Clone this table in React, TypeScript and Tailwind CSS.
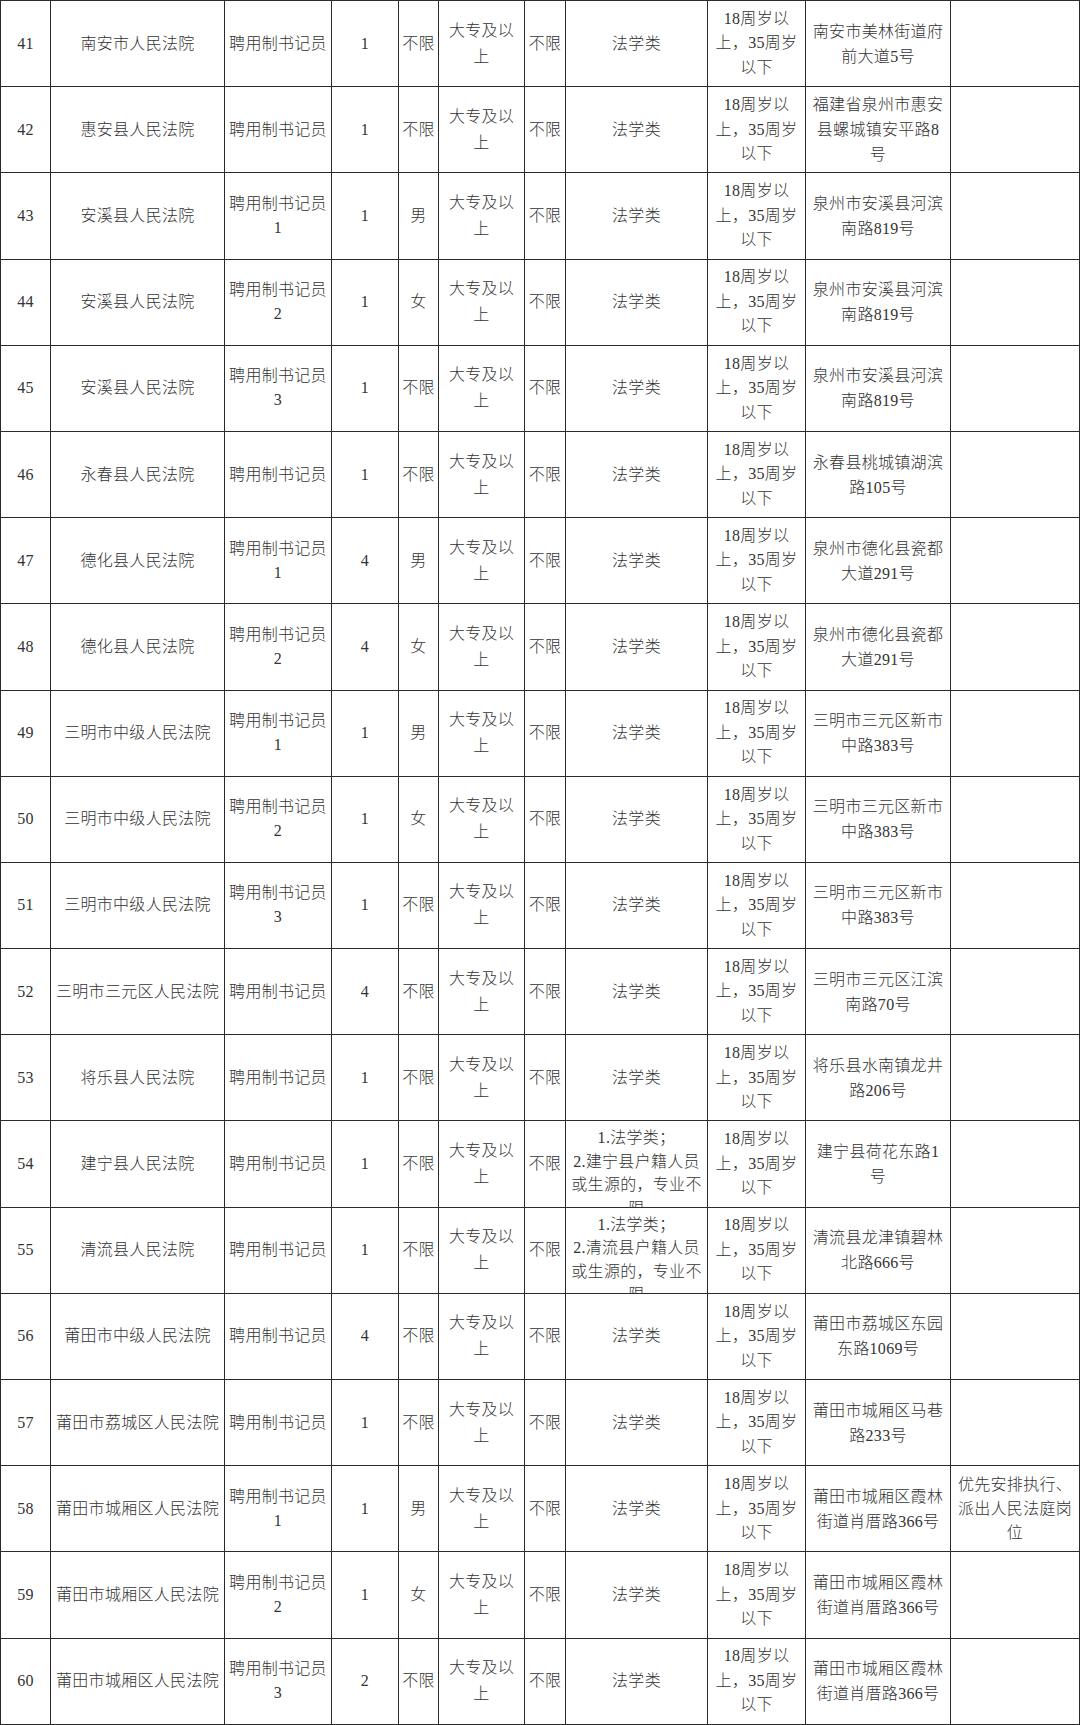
import React from 'react';

type Row = {
    no: number;
    court: string;
    post: string[];
    count: string;
    sex: string;
    major: string[];
    addr: string[];
    note?: string[];
};

const ADDR_AX = ['泉州市安溪县河滨', '南路819号'];
const ADDR_DH = ['泉州市德化县瓷都', '大道291号'];
const ADDR_SM = ['三明市三元区新市', '中路383号'];
const ADDR_CX = ['莆田市城厢区霞林', '街道肖厝路366号'];
const LAW = ['法学类'];

const rows: Row[] = [
    { no: 41, court: '南安市人民法院', post: ['聘用制书记员'], count: '1', sex: '不限', major: LAW, addr: ['南安市美林街道府', '前大道5号'] },
    { no: 42, court: '惠安县人民法院', post: ['聘用制书记员'], count: '1', sex: '不限', major: LAW, addr: ['福建省泉州市惠安', '县螺城镇安平路8', '号'] },
    { no: 43, court: '安溪县人民法院', post: ['聘用制书记员', '1'], count: '1', sex: '男', major: LAW, addr: ADDR_AX },
    { no: 44, court: '安溪县人民法院', post: ['聘用制书记员', '2'], count: '1', sex: '女', major: LAW, addr: ADDR_AX },
    { no: 45, court: '安溪县人民法院', post: ['聘用制书记员', '3'], count: '1', sex: '不限', major: LAW, addr: ADDR_AX },
    { no: 46, court: '永春县人民法院', post: ['聘用制书记员'], count: '1', sex: '不限', major: LAW, addr: ['永春县桃城镇湖滨', '路105号'] },
    { no: 47, court: '德化县人民法院', post: ['聘用制书记员', '1'], count: '4', sex: '男', major: LAW, addr: ADDR_DH },
    { no: 48, court: '德化县人民法院', post: ['聘用制书记员', '2'], count: '4', sex: '女', major: LAW, addr: ADDR_DH },
    { no: 49, court: '三明市中级人民法院', post: ['聘用制书记员', '1'], count: '1', sex: '男', major: LAW, addr: ADDR_SM },
    { no: 50, court: '三明市中级人民法院', post: ['聘用制书记员', '2'], count: '1', sex: '女', major: LAW, addr: ADDR_SM },
    { no: 51, court: '三明市中级人民法院', post: ['聘用制书记员', '3'], count: '1', sex: '不限', major: LAW, addr: ADDR_SM },
    { no: 52, court: '三明市三元区人民法院', post: ['聘用制书记员'], count: '4', sex: '不限', major: LAW, addr: ['三明市三元区江滨', '南路70号'] },
    { no: 53, court: '将乐县人民法院', post: ['聘用制书记员'], count: '1', sex: '不限', major: LAW, addr: ['将乐县水南镇龙井', '路206号'] },
    { no: 54, court: '建宁县人民法院', post: ['聘用制书记员'], count: '1', sex: '不限', major: ['1.法学类；', '2.建宁县户籍人员', '或生源的，专业不', '限'], addr: ['建宁县荷花东路1', '号'] },
    { no: 55, court: '清流县人民法院', post: ['聘用制书记员'], count: '1', sex: '不限', major: ['1.法学类；', '2.清流县户籍人员', '或生源的，专业不', '限'], addr: ['清流县龙津镇碧林', '北路666号'] },
    { no: 56, court: '莆田市中级人民法院', post: ['聘用制书记员'], count: '4', sex: '不限', major: LAW, addr: ['莆田市荔城区东园', '东路1069号'] },
    { no: 57, court: '莆田市荔城区人民法院', post: ['聘用制书记员'], count: '1', sex: '不限', major: LAW, addr: ['莆田市城厢区马巷', '路233号'] },
    { no: 58, court: '莆田市城厢区人民法院', post: ['聘用制书记员', '1'], count: '1', sex: '男', major: LAW, addr: ADDR_CX, note: ['优先安排执行、', '派出人民法庭岗', '位'] },
    { no: 59, court: '莆田市城厢区人民法院', post: ['聘用制书记员', '2'], count: '1', sex: '女', major: LAW, addr: ADDR_CX },
    { no: 60, court: '莆田市城厢区人民法院', post: ['聘用制书记员', '3'], count: '2', sex: '不限', major: LAW, addr: ADDR_CX },
];

// one table cell, lines given explicitly like the source document
const Cell = ({
    lines,
    leading = 'leading-[24px]',
    top = false,
}: {
    lines: string[];
    leading?: string;
    top?: boolean;
}) => (
    <div
        className={`flex flex-col items-center overflow-hidden border-r border-b border-[#2a2a2a] text-center whitespace-nowrap ${leading} ${
            top ? 'justify-start pt-[5px]' : 'justify-center'
        }`}
    >
        {lines.map((l, i) => (
            <span key={i}>{l}</span>
        ))}
    </div>
);

export default function App() {
    return (
        <div className="w-[1080px] bg-white">
            <div
                className="grid w-[1080px] grid-cols-[50px_174px_107px_67px_40px_86px_41px_142px_98px_145px_129px] auto-rows-[86.2px] border-t border-l border-[#2a2a2a] text-[16px] font-light tracking-[0.3px] text-[#333]"
                style={{ fontFamily: '"Liberation Serif", "Noto Sans CJK SC", serif' }}
            >
                {rows.map((r) => {
                    const multi = r.major.length > 1;
                    return (
                        <React.Fragment key={r.no}>
                            <Cell lines={[String(r.no)]} />
                            <Cell lines={[r.court]} />
                            <Cell lines={r.post} />
                            <Cell lines={[r.count]} />
                            <Cell lines={[r.sex]} />
                            <Cell lines={['大专及以', '上']} leading="leading-[26px]" />
                            <Cell lines={['不限']} />
                            <Cell lines={r.major} leading={multi ? 'leading-[23.5px]' : 'leading-[24px]'} top={multi} />
                            <Cell lines={['18周岁以', '上，35周岁', '以下']} leading="leading-[24.5px]" />
                            <Cell lines={r.addr} leading="leading-[25px]" />
                            <Cell lines={r.note ?? []} />
                        </React.Fragment>
                    );
                })}
            </div>
        </div>
    );
}
